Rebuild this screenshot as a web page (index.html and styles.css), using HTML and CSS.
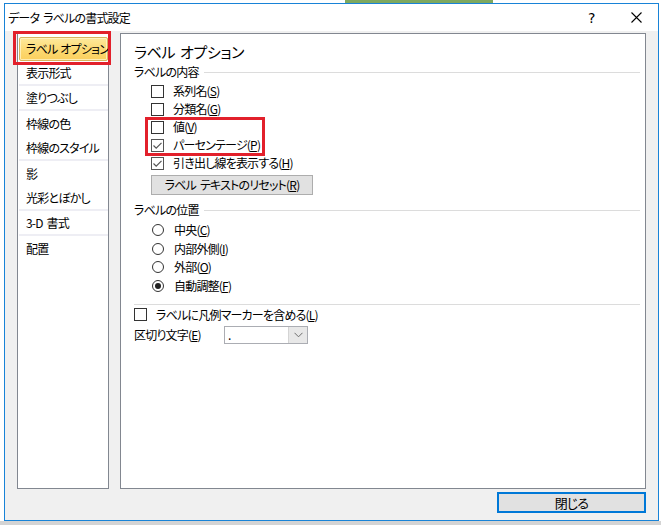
FILE: index.html
```html
<!DOCTYPE html>
<html lang="ja">
<head>
	<meta charset="UTF-8">
	<title>データ ラベルの書式設定</title>
	<link rel="stylesheet" href="styles.css">
</head>
<body>
	<div class="dialog">
		<div class="titlebar">
			<span class="titlebar__text">データ ラベルの書式設定</span>
			<span class="titlebar__help">?</span>
			<span class="titlebar__close">
				<svg width="11" height="11" viewBox="0 0 11 11"><path d="M0.5 0.5L10.5 10.5M10.5 0.5L0.5 10.5" stroke="#000" stroke-width="1.1" fill="none"/></svg>
			</span>
		</div>

		<div class="dialog__body">
			<div class="panels">
				<ul class="nav">
					<li class="nav__item nav__item--active">ラベル オプション</li>
					<li class="nav__item nav__item--sep">表示形式</li>
					<li class="nav__item nav__item--sep">塗りつぶし</li>
					<li class="nav__item">枠線の色</li>
					<li class="nav__item nav__item--sep">枠線のスタイル</li>
					<li class="nav__item">影</li>
					<li class="nav__item nav__item--sep">光彩とぼかし</li>
					<li class="nav__item nav__item--sep">3-D 書式</li>
					<li class="nav__item">配置</li>
				</ul>

				<div class="pane">
					<div class="pane__title">ラベル オプション</div>

					<div class="group-head">
						<span>ラベルの内容</span>
						<span class="group-head__line"></span>
					</div>
					<div class="options">
						<div class="opt"><span class="check"></span>系列名(<u>S</u>)</div>
						<div class="opt"><span class="check"></span>分類名(<u>G</u>)</div>
						<div class="mark">
							<div class="opt"><span class="check"></span>値(<u>V</u>)</div>
							<div class="opt"><span class="check check--on"><svg width="11" height="11" viewBox="0 0 11 11"><path d="M1.5 5.5L4.2 8.2L9.5 2.8" stroke="#555" stroke-width="1.2" fill="none"/></svg></span>パーセンテージ(<u>P</u>)</div>
						</div>
						<div class="opt"><span class="check check--on"><svg width="11" height="11" viewBox="0 0 11 11"><path d="M1.5 5.5L4.2 8.2L9.5 2.8" stroke="#555" stroke-width="1.2" fill="none"/></svg></span>引き出し線を表示する(<u>H</u>)</div>
					</div>
					<button class="btn btn--reset">ラベル テキストのリセット(<u>R</u>)</button>

					<div class="group-head group-head--pos">
						<span>ラベルの位置</span>
						<span class="group-head__line"></span>
					</div>
					<div class="options options--radio">
						<div class="opt"><span class="radio"></span>中央(<u>C</u>)</div>
						<div class="opt"><span class="radio"></span>内部外側(<u>I</u>)</div>
						<div class="opt"><span class="radio"></span>外部(<u>O</u>)</div>
						<div class="opt"><span class="radio radio--on"></span>自動調整(<u>F</u>)</div>
					</div>

					<div class="divider"></div>

					<div class="opt opt--flat"><span class="check"></span>ラベルに凡例マーカーを含める(<u>L</u>)</div>
					<div class="sep-row">
						<span class="sep-row__label">区切り文字(<u>E</u>)</span>
						<span class="combo">
							<span class="combo__value">.</span>
							<span class="combo__arrow">
								<svg width="9" height="6" viewBox="0 0 9 6"><path d="M0.5 0.8L4.5 4.8L8.5 0.8" stroke="#6d6d6d" stroke-width="1" fill="none"/></svg>
							</span>
						</span>
					</div>
				</div>
			</div>

			<div class="footer">
				<button class="btn btn--close">閉じる</button>
			</div>
		</div>
	</div>
</body>
</html>
```

FILE: styles.css
```css
*, *::before, *::after { box-sizing: border-box }
body {
	margin: 0;
	height: 525px;
	overflow: hidden;
	font-family: 'Noto Sans CJK JP', 'Noto Sans', sans-serif;
	font-size: 12px;
	font-feature-settings: "palt" 1;
	letter-spacing: -0.8px;
	word-spacing: 2px;
	color: #000;
	background:
		linear-gradient(#7ea85e, #7ea85e) 345px 0 / 148px 3px no-repeat,
		linear-gradient(#d4d4d4, #d4d4d4) 0 521px / 100% 4px no-repeat,
		#fff;
}
u { text-decoration: underline; text-underline-offset: 1px }
.dialog {
	display: flex;
	flex-direction: column;
	width: 655px;
	height: 518px;
	margin: 3px 0 0 4px;
	border: 1px solid #1883d7;
	background: #f0f0f0;
}
.titlebar {
	display: flex;
	height: 27px;
	align-items: center;
	padding: 0 0 0 3px;
	background: #fff;
	line-height: 16px;
}
.titlebar__text { flex: 1 }
.titlebar__help {
	width: 14px;
	margin-right: 29px;
	font-family: 'DejaVu Sans', sans-serif;
	font-size: 14px;
	letter-spacing: 0;
}
.titlebar__close {
	display: flex;
	width: 11px;
	margin-right: 16px;
}
.dialog__body {
	flex: 1;
	padding: 2px 12px 6px;
}
.panels {
	display: flex;
	gap: 11px;
	height: 456px;
}

/* left list */
.nav {
	position: relative;
	width: 92px;
	margin: 0;
	padding: 2px 0 0 1px;
	list-style: none;
	background: #fff;
	border: 1px solid #828790;
}
.nav__item {
	height: 25px;
	padding: 0 0 0 7px;
	line-height: 25px;
	white-space: nowrap;
}
.nav__item--sep {
	border-bottom: 2px solid #eeeef4;
	line-height: 23px;
}
.nav__item--active {
	position: relative;
	height: 24px;
	margin: 1px 0 0 0;
	padding-left: 6px;
	line-height: 22px;
	word-spacing: 1px;
	border: 1px solid #d7b35d;
	border-radius: 2px;
	background: linear-gradient(#fde99c, #fcd86f 60%, #fbcf5e);
	box-shadow: inset 0 0 0 1px rgba(255, 248, 214, .7);
}
.nav__item--active::after {
	content: '';
	position: absolute;
	left: -7px;
	top: -7px;
	width: 98px;
	height: 34px;
	border: 3px solid #e2202b;
}

/* right pane */
.pane {
	flex: 1;
	padding: 8px 5px 0 13px;
	background: #fff;
	border: 1px solid #828790;
	line-height: 18px;
}
.pane__title {
	font-size: 15px;
	line-height: 20px;
	letter-spacing: -0.4px;
}
.group-head {
	display: flex;
	align-items: center;
	height: 16px;
	margin-top: 2px;
	line-height: 16px;
}
.group-head__line {
	flex: 1;
	margin-left: 5px;
	border-top: 1px solid #dcdcdc;
}
.group-head--pos { margin-top: 7px }
.options {
	margin-top: 2px;
	padding-left: 17px;
}
.options--radio { margin-top: 3px }
.mark { position: relative }
.mark::after {
	content: '';
	position: absolute;
	left: -6px;
	top: -1px;
	width: 120px;
	height: 39px;
	border: 3px solid #e2202b;
}
.opt {
	display: flex;
	align-items: center;
	height: 18px;
	white-space: nowrap;
}
.options--radio .opt { height: 18.5px }
.check {
	display: flex;
	align-items: center;
	justify-content: center;
	width: 13px;
	height: 13px;
	margin-right: 9px;
	border: 1px solid #333;
	background: #fff;
}
.check--on { border-color: #555 }
.radio {
	position: relative;
	width: 12px;
	height: 12px;
	margin: 0 10px 0 1px;
	border: 1px solid #333;
	border-radius: 50%;
}
.radio--on::after {
	content: '';
	position: absolute;
	left: 2px;
	top: 2px;
	width: 6px;
	height: 6px;
	border-radius: 50%;
	background: #222;
}
.btn {
	font-family: inherit;
	font-size: 12px;
	font-feature-settings: "palt" 1;
	letter-spacing: -0.8px;
	word-spacing: 2px;
	color: #000;
	background: #e1e1e1;
	border: 1px solid #adadad;
	padding: 0;
	line-height: 16px;
	white-space: nowrap;
}
.btn--reset {
	display: block;
	width: 162px;
	height: 20px;
	margin: 3px 0 0 17px;
}
.divider {
	margin-top: 9px;
	border-top: 1px solid #dcdcdc;
}
.opt--flat {
	height: 17px;
	margin-top: 1px;
}
.opt--flat .check { margin-right: 9px }
.sep-row {
	display: flex;
	align-items: center;
	height: 18px;
	margin-top: 3px;
}
.sep-row__label { width: 90px }
.combo {
	display: flex;
	width: 84px;
	height: 18px;
	border: 1px solid #abadb3;
	background: #fff;
}
.combo__value {
	flex: 1;
	padding-left: 3px;
	line-height: 16px;
}
.combo__arrow {
	display: flex;
	width: 19px;
	align-items: center;
	justify-content: center;
	background: #e8e8e8;
	border-left: 1px solid #d4d4d4;
}

/* footer */
.footer {
	display: flex;
	justify-content: flex-end;
	margin-top: 3px;
}
.btn--close {
	width: 149px;
	height: 21px;
	border: 2px solid #0078d7;
	font-size: 13px;
}
```
